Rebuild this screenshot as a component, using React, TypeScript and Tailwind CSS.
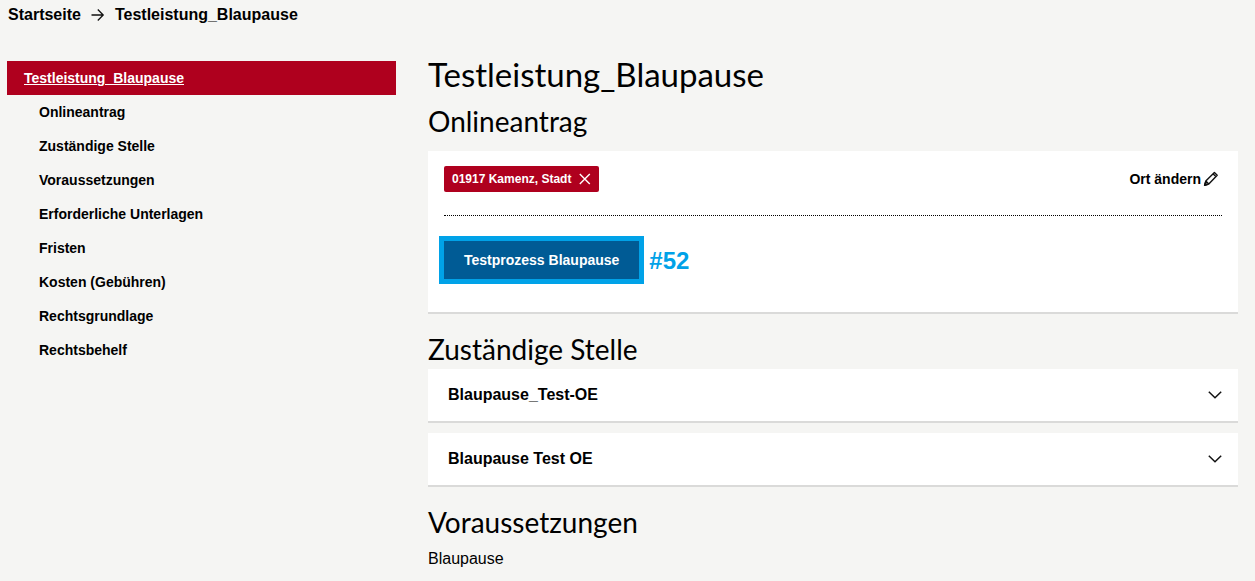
import { ReactNode } from "react";

const sections = [
  "Onlineantrag",
  "Zuständige Stelle",
  "Voraussetzungen",
  "Erforderliche Unterlagen",
  "Fristen",
  "Kosten (Gebühren)",
  "Rechtsgrundlage",
  "Rechtsbehelf",
];

const offices = ["Blaupause_Test-OE", "Blaupause Test OE"];

function SectionTitle({ children }: { children: ReactNode }) {
  return (
    <h2 className="pb-0.5 font-['Lato',sans-serif] text-[28px] leading-9">{children}</h2>
  );
}

function ArrowIcon() {
  return (
    <svg width="14" height="14" viewBox="0 0 14 14" fill="none" stroke="#111" strokeWidth="1.3" aria-hidden="true">
      <path d="M.5 7H12M6.8 1.5 12.2 7 6.8 12.5" />
    </svg>
  );
}

function CloseIcon() {
  return (
    <svg width="12" height="12" viewBox="0 0 12 12" fill="none" stroke="#fff" strokeWidth="1.4" aria-hidden="true">
      <path d="m.8 1 10 10M10.8 1 .8 11" />
    </svg>
  );
}

function PencilIcon() {
  return (
    <svg width="16" height="16" viewBox="0 0 16 16" fill="none" stroke="#111" strokeWidth="1.4" strokeLinejoin="round" aria-hidden="true">
      <path d="M1.6 14.4 2.8 10 11.4 1.4 14.2 4.2 5.8 13ZM2.8 10 5.8 13M10 2.8l2.8 2.8" />
      <path d="m1.6 14.4.6-2.4 1.7 1.7Z" fill="#111" />
    </svg>
  );
}

function ChevronIcon() {
  return (
    <svg width="14" height="8" viewBox="0 0 14 8" fill="none" stroke="#111" strokeWidth="1.5" aria-hidden="true">
      <path d="m.8.8 6.2 6 6.2-6" />
    </svg>
  );
}

export default function App() {
  return (
    <div className="min-h-screen bg-[#f5f5f3] pr-[17px] pb-3 pl-[7px] font-['Liberation_Sans',Arial,sans-serif] text-black">
      <nav aria-label="Brotkrumen" className="flex h-[29px] items-center gap-2.5 pl-px text-base font-bold">
        <a href="#start">Startseite</a>
        <ArrowIcon />
        <a href="#top">Testleistung_Blaupause</a>
      </nav>

      <div className="grid grid-cols-[389fr_810fr] gap-8 pt-6">
        <nav aria-label="Inhalt" className="pt-2 text-sm font-bold">
          <a href="#top" className="flex h-[34px] items-center bg-[#af001e] pl-[17px] text-white underline">
            Testleistung_Blaupause
          </a>
          <ul>
            {sections.map((name) => (
              <li key={name}>
                <a href="#top" className="flex h-[34px] items-center pl-8">
                  {name}
                </a>
              </li>
            ))}
          </ul>
        </nav>

        <main id="top">
          <h1 className="font-['Lato',sans-serif] text-[33px] leading-[42px]">Testleistung_Blaupause</h1>

          <section className="pt-2">
            <SectionTitle>Onlineantrag</SectionTitle>
            <div className="mt-2.5 border-b-2 border-[#dadad9] bg-white px-4 pt-[15px] pb-7">
              <div className="flex items-center justify-between border-b border-dotted border-black pb-[23px]">
                <button type="button" className="flex h-[26px] items-center gap-2 rounded-xs bg-[#af001e] px-2 text-xs font-bold text-white">
                  01917 Kamenz, Stadt
                  <CloseIcon />
                </button>
                <button type="button" className="flex items-center gap-0.5 pr-[3px] text-sm font-bold">
                  Ort ändern
                  <PencilIcon />
                </button>
              </div>
              <div className="-ml-[5px] flex items-center gap-[5px] pt-5">
                <button type="button" className="h-12 border-5 border-[#00a2e8] bg-[#005b95] px-5 text-sm font-bold text-white">
                  Testprozess Blaupause
                </button>
                <span className="pt-0.5 text-2xl font-bold text-[#00a2e8]">#52</span>
              </div>
            </div>
          </section>

          <section className="pt-[17px]">
            <SectionTitle>Zuständige Stelle</SectionTitle>
            <div className="flex flex-col gap-2.5">
              {offices.map((name) => (
                <button
                  key={name}
                  type="button"
                  aria-expanded="false"
                  className="flex h-[54px] items-center justify-between border-b-2 border-[#dadad9] bg-white pr-4 pl-5 text-left text-base font-bold"
                >
                  {name}
                  <ChevronIcon />
                </button>
              ))}
            </div>
          </section>

          <section className="pt-[17px]">
            <SectionTitle>Voraussetzungen</SectionTitle>
            <p className="pt-[5px] text-base leading-6">Blaupause</p>
          </section>
        </main>
      </div>
    </div>
  );
}
